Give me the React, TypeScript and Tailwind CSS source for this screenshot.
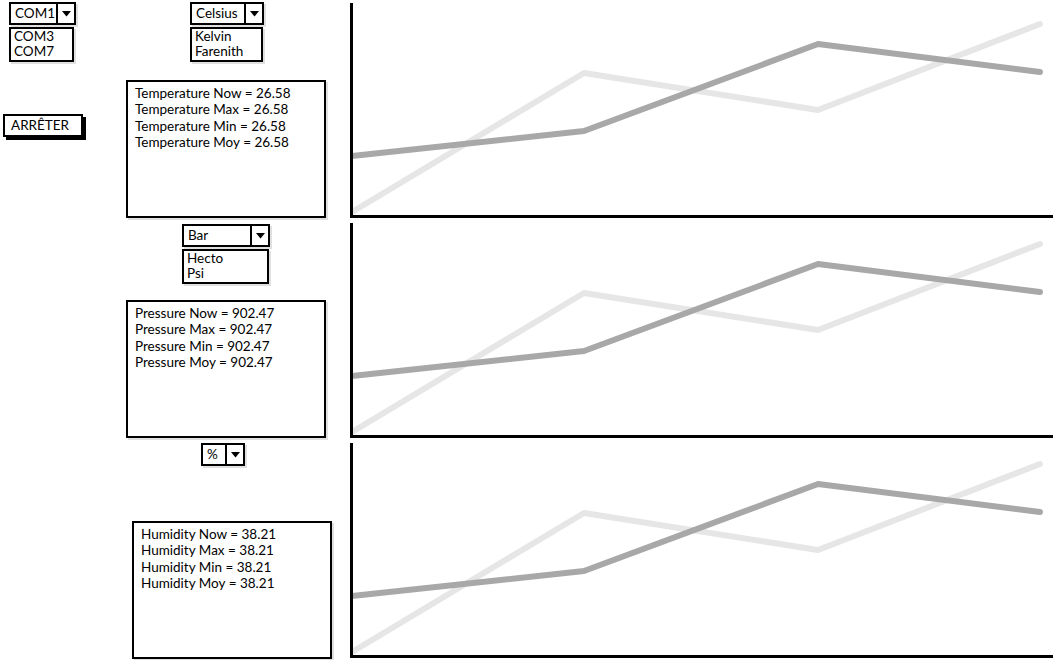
import React from 'react';

const font = "font-['Lato','Liberation_Sans',sans-serif]";

type ComboProps = {
  value: string;
  options?: string[];
  textWidth: string;
  listWidth?: string;
};

const Combo: React.FC<ComboProps> = ({ value, options, textWidth, listWidth }) => (
  <div className="flex flex-col items-start">
    <div className="flex h-[23px] border-2 border-black bg-white shadow-[2px_2px_0_rgba(0,0,0,0.12)]">
      <div className={`${textWidth} flex items-center pl-[4px] text-[13.5px] leading-none text-black`}>{value}</div>
      <div className="flex w-[18px] items-center justify-center border-l-2 border-black">
        <svg width="9" height="6" viewBox="0 0 9 6">
          <path d="M0 0 L9 0 L4.5 5.5 Z" fill="#000" />
        </svg>
      </div>
    </div>
    {options && (
      <div className={`${listWidth} mt-[2px] flex flex-col border-2 border-black bg-white pb-[1px] pl-[3px] shadow-[2px_2px_0_rgba(0,0,0,0.12)]`}>
        {options.map((o) => (
          <div key={o} className="text-[13.5px] leading-[15px] text-black">{o}</div>
        ))}
      </div>
    )}
  </div>
);

const StatsBox: React.FC<{ label: string; value: string }> = ({ label, value }) => (
  <div className="flex h-[138px] w-[200px] flex-col border-2 border-black bg-white pl-[7px] pt-[3px] shadow-[2px_2px_0_rgba(0,0,0,0.12)]">
    {['Now', 'Max', 'Min', 'Moy'].map((k) => (
      <div key={k} className="text-[13.5px] leading-[16.3px] text-black">
        {label} {k} = {value}
      </div>
    ))}
  </div>
);

const Chart: React.FC = () => (
  <div className="h-[220px] w-[703px]">
    <svg width="703" height="220" viewBox="0 0 703 220">
      <polyline
        points="2,212 234,73 468,110 690,24"
        fill="none"
        stroke="#e6e6e6"
        strokeWidth="6"
        strokeLinecap="round"
        strokeLinejoin="round"
      />
      <polyline
        points="2,156 234,131 468,44 690,72"
        fill="none"
        stroke="#a8a8a8"
        strokeWidth="6"
        strokeLinecap="round"
        strokeLinejoin="round"
      />
      <line x1="1.5" y1="3" x2="1.5" y2="218" stroke="#000" strokeWidth="3" />
      <line x1="0" y1="216.5" x2="703" y2="216.5" stroke="#000" strokeWidth="3" />
    </svg>
  </div>
);

export default function App() {
  return (
    <div className={`${font} flex h-[660px] w-[1053px] overflow-hidden bg-white`}>
      {/* controls */}
      <div className="flex w-[350px] flex-col">
        {/* temperature row */}
        <div className="flex h-[220px]">
          <div className="flex w-[126px] flex-col">
            <div className="ml-[9px] mt-[2px]">
              <Combo value="COM1" options={['COM3', 'COM7']} textWidth="w-[45px]" listWidth="w-[65px]" />
            </div>
            <div className="ml-[3px] mt-[52px] flex h-[23px] w-[80px] items-center border-2 border-black bg-white pl-[6px] text-[13.5px] leading-none text-black shadow-[3px_3px_0_#000]">
              ARRÊTER
            </div>
          </div>
          <div className="flex flex-col">
            <div className="ml-[64px] mt-[2px]">
              <Combo value="Celsius" options={['Kelvin', 'Farenith']} textWidth="w-[52px]" listWidth="w-[73px]" />
            </div>
            <div className="mt-[18px]">
              <StatsBox label="Temperature" value="26.58" />
            </div>
          </div>
        </div>

        {/* pressure row */}
        <div className="flex h-[220px] pl-[126px]">
          <div className="flex flex-col">
            <div className="ml-[56px] mt-[4px]">
              <Combo value="Bar" options={['Hecto', 'Psi']} textWidth="w-[66px]" listWidth="w-[87px]" />
            </div>
            <div className="mt-[16px]">
              <StatsBox label="Pressure" value="902.47" />
            </div>
          </div>
        </div>

        {/* humidity row */}
        <div className="flex h-[220px] pl-[132px]">
          <div className="flex flex-col">
            <div className="ml-[69px] mt-[3px]">
              <Combo value="%" textWidth="w-[22px]" />
            </div>
            <div className="mt-[55px]">
              <StatsBox label="Humidity" value="38.21" />
            </div>
          </div>
        </div>
      </div>

      {/* charts */}
      <div className="flex flex-col">
        <Chart />
        <Chart />
        <Chart />
      </div>
    </div>
  );
}
